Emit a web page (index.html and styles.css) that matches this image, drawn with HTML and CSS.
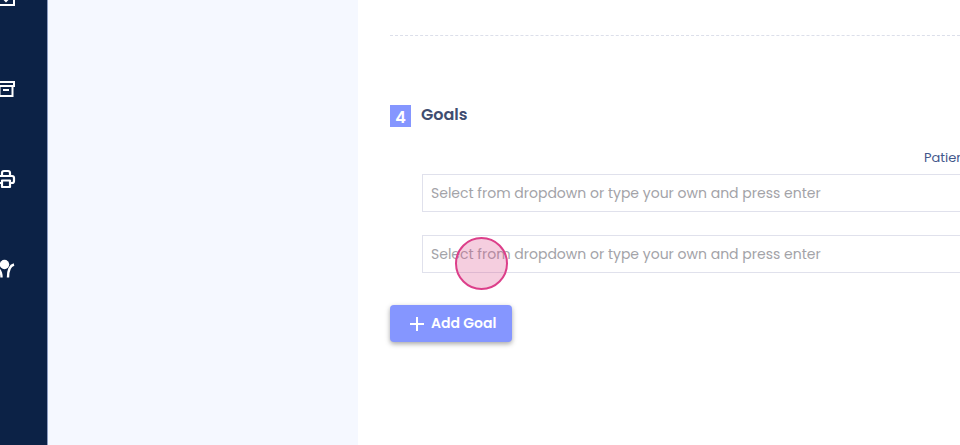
FILE: index.html
```html
<!DOCTYPE html>
<html lang="en">
<head>
    <meta charset="UTF-8">
    <title>Goals</title>
    <link rel="stylesheet" href="styles.css">
</head>
<body>
    <nav class="sidebar">
        <svg class="nav-icon" viewBox="0 0 18 18" fill="none" stroke="#fff" stroke-width="2"><path d="M1 1h16v16H1zM9 5v8M5.500 9.500L9 13l3.500-3.500"/></svg>
        <svg class="nav-icon" viewBox="0 0 18 18" fill="none" stroke="#fff" stroke-width="2"><path d="M1 2h16v4H1zM2.500 6v10h13V6M6 10h6"/></svg>
        <svg class="nav-icon" viewBox="0 0 18 18" fill="none" stroke="#fff" stroke-width="2.200" stroke-linejoin="round"><path d="M5 6V3q0-2 2-2h4q2 0 2 2v3M4 13H3q-2 0-2-2V8q0-2 2-2h12q2 0 2 2v3q0 2-2 2h-1M5 10.500h8V17H5z"/></svg>
        <svg class="nav-icon" viewBox="0 0 18 18" fill="none" stroke="#fff" stroke-width="2.400"><circle cx="7.500" cy="4.500" r="4.700" fill="#fff" stroke="none"/><path d="M-3 7C2 8 4.500 11 4.500 17.500M17 4.500C13.500 5.500 11 9 11 17.500"/></svg>
    </nav>
    <aside class="panel"></aside>
    <main class="content">
        <hr class="divider">
        <section class="goals">
            <h2 class="section-title"><span class="badge">4</span>Goals</h2>
            <div class="field-label"><span>Patient</span></div>
            <div class="goal-input">Select from dropdown or type your own and press enter</div>
            <div class="goal-input">Select from dropdown or type your own and press enter</div>
            <button class="add-btn" type="button">
                <svg viewBox="0 0 14 14" fill="none" stroke="#fff" stroke-width="2"><path d="M7 0v14M0 7h14"/></svg>
                Add Goal
            </button>
        </section>
    </main>
    <div class="click-marker"></div>
</body>
</html>
```

FILE: styles.css
```css
html, body {
    margin: 0;
    height: 100%;
    overflow: hidden;
}

body {
    display: flex;
    width: 960px;
    height: 445px;
    font-family: Poppins, "Open Sans", sans-serif;
    background: #fff;
}

.sidebar {
    width: 47px;
    flex: none;
    background: #0c2246;
    border-right: 1px solid #8c9cc0;
    display: flex;
    flex-direction: column;
    align-items: flex-end;
    gap: 72px;
    padding: 0 32px 0 0;
    box-sizing: content-box;
    margin-left: -32px;
    overflow: hidden;
}

.nav-icon {
    width: 18px;
    height: 18px;
    flex: none;
    overflow: visible;
}

.nav-icon:first-child {
    margin-top: -12px;
}

.nav-icon:nth-child(2) {
    margin-top: 2px;
}

.panel {
    width: 310px;
    flex: none;
    background: #f5f8ff;
}

.content {
    flex: 1;
    min-width: 0;
    padding-left: 32px;
    overflow: hidden;
}

.divider {
    border: 0;
    border-top: 1px dashed #dcdfea;
    margin: 35px 0 0;
}

.goals {
    margin-top: 69px;
}

.section-title {
    display: flex;
    align-items: flex-start;
    gap: 10px;
    margin: 0;
    font-size: 16px;
    line-height: 20px;
    font-weight: 600;
    color: #3f4d70;
}

.badge {
    width: 21px;
    height: 22px;
    background: #8596ff;
    color: #fff;
    text-align: center;
    line-height: 25px;
}

.field-label {
    margin: 22px 0 0 534px;
    width: 100px;
    font-size: 13px;
    line-height: 18px;
    color: #44588c;
}

.goal-input {
    width: 700px;
    height: 36px;
    margin: 7px 0 0 32px;
    padding-left: 8px;
    border: 1px solid #e0e1ec;
    font-size: 14px;
    line-height: 36px;
    color: #a3a3a8;
}

.goal-input + .goal-input {
    margin-top: 23px;
}

.add-btn {
    display: flex;
    align-items: center;
    gap: 7px;
    width: 122px;
    height: 37px;
    margin-top: 32px;
    padding: 0 0 0 20px;
    border: 0;
    border-radius: 4px;
    background: #8596ff;
    box-shadow: 0 2px 5px rgba(0, 0, 0, .35);
    color: #fff;
    font-family: inherit;
    font-size: 14px;
    font-weight: 600;
}

.add-btn svg {
    width: 14px;
    height: 14px;
}

.click-marker {
    position: absolute;
    left: 455px;
    top: 237px;
    width: 49px;
    height: 49px;
    border: 2px solid #dc3f8a;
    border-radius: 50%;
    background: rgba(220, 80, 140, .28);
    box-sizing: content-box;
}
```
